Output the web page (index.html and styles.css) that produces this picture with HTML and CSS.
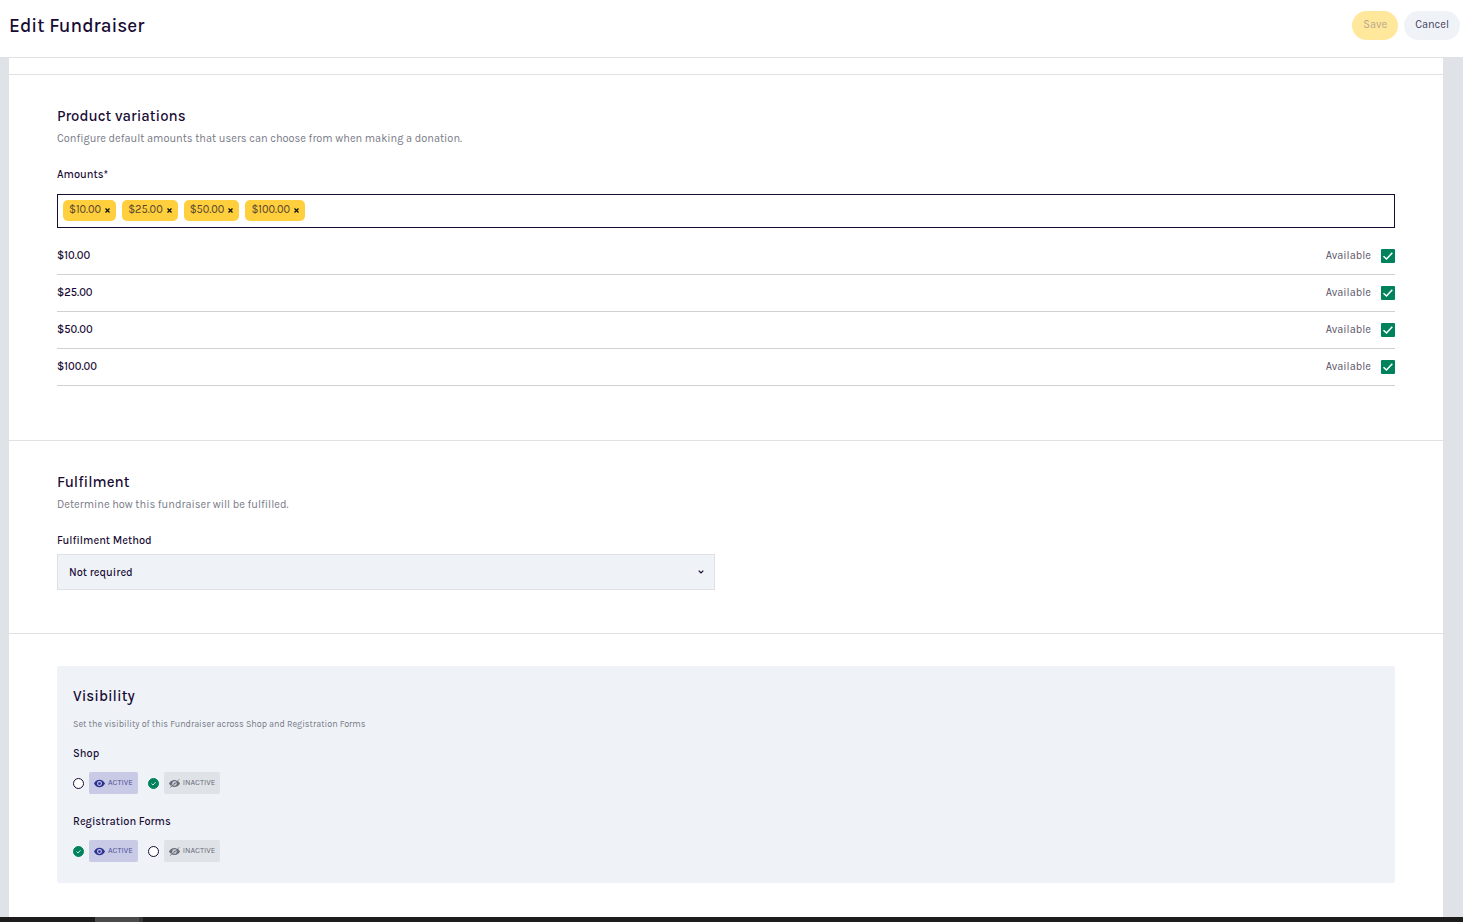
FILE: index.html
```html
<!DOCTYPE html>
<html lang="en">
<head>
<meta charset="utf-8">
<meta name="viewport" content="width=device-width, initial-scale=1">
<title>Edit Fundraiser</title>
<link rel="stylesheet" href="styles.css">
</head>
<body>
<svg class="sprite" aria-hidden="true">
  <symbol id="eye" viewBox="0 0 20 16">
    <path fill="currentColor" fill-rule="evenodd" d="M10 1C5.500 1 2 4 0 8c2 4 5.500 7 10 7s8-3 10-7c-2-4-5.500-7-10-7zM10 3.500a4.500 4.500 0 1 1 0 9 4.500 4.500 0 0 1 0-9zM10 5.500a2.500 2.500 0 1 0 0 5 2.500 2.500 0 0 0 0-5z"/>
  </symbol>
  <symbol id="eye-off" viewBox="0 0 20 16">
    <path fill="currentColor" fill-rule="evenodd" d="M10 1.500C5.500 1.500 2 4 0 8c2 4 5.500 6.500 10 6.500S18 12 20 8c-2-4-5.500-6.500-10-6.500zM10 4a4 4 0 1 1 0 8 4 4 0 0 1 0-8zM10 6a2 2 0 1 0 0 4 2 2 0 0 0 0-4z"/>
    <path stroke="#dfe2e7" stroke-width="1" d="M1.500 14 17 0"/>
    <path stroke="currentColor" stroke-width="1.200" d="M1.500 16 19.500 0"/>
  </symbol>
  <symbol id="cross" viewBox="0 0 6 6">
    <path fill="none" stroke="currentColor" stroke-width="1.500" d="M.6.6l4.800 4.800M5.400.6.6 5.400"/>
  </symbol>
</svg>

<header class="topbar">
  <h1 class="topbar-title">Edit Fundraiser</h1>
  <div class="topbar-actions">
    <button class="button button-primary" type="button" disabled>Save</button>
    <button class="button" type="button">Cancel</button>
  </div>
</header>

<div class="backdrop">
  <main class="panel">
    <div class="panel-strip"></div>

    <section class="section variations">
      <h2 class="heading">Product variations</h2>
      <p class="description">Configure default amounts that users can choose from when making a donation.</p>
      <label class="field-label" for="amounts">Amounts*</label>
      <div class="chip-box">
        <span class="chip">$10.00<button class="chip-remove" type="button" aria-label="Remove $10.00"><svg class="cross"><use href="#cross"/></svg></button></span>
        <span class="chip">$25.00<button class="chip-remove" type="button" aria-label="Remove $25.00"><svg class="cross"><use href="#cross"/></svg></button></span>
        <span class="chip">$50.00<button class="chip-remove" type="button" aria-label="Remove $50.00"><svg class="cross"><use href="#cross"/></svg></button></span>
        <span class="chip">$100.00<button class="chip-remove" type="button" aria-label="Remove $100.00"><svg class="cross"><use href="#cross"/></svg></button></span>
        <input class="chip-input" id="amounts" type="text">
      </div>
      <ul class="amounts">
        <li class="amount"><span class="amount-value">$10.00</span><label class="available">Available<input class="tick" type="checkbox" checked></label></li>
        <li class="amount"><span class="amount-value">$25.00</span><label class="available">Available<input class="tick" type="checkbox" checked></label></li>
        <li class="amount"><span class="amount-value">$50.00</span><label class="available">Available<input class="tick" type="checkbox" checked></label></li>
        <li class="amount"><span class="amount-value">$100.00</span><label class="available">Available<input class="tick" type="checkbox" checked></label></li>
      </ul>
    </section>

    <section class="section fulfilment">
      <h2 class="heading">Fulfilment</h2>
      <p class="description">Determine how this fundraiser will be fulfilled.</p>
      <div class="columns">
        <div>
          <label class="field-label" for="method">Fulfilment Method</label>
          <select class="select" id="method">
            <option>Not required</option>
          </select>
        </div>
      </div>
    </section>

    <section class="section">
      <div class="card">
        <h2 class="heading">Visibility</h2>
        <p class="card-description">Set the visibility of this Fundraiser across Shop and Registration Forms</p>
        <fieldset class="choice">
          <legend class="choice-title">Shop</legend>
          <div class="options">
            <label class="option"><input class="radio" type="radio" name="shop"><span class="tag tag-active"><svg class="eye"><use href="#eye"/></svg>ACTIVE</span></label>
            <label class="option"><input class="radio" type="radio" name="shop" checked><span class="tag"><svg class="eye"><use href="#eye-off"/></svg>INACTIVE</span></label>
          </div>
        </fieldset>
        <fieldset class="choice">
          <legend class="choice-title">Registration Forms</legend>
          <div class="options">
            <label class="option"><input class="radio" type="radio" name="forms" checked><span class="tag tag-active"><svg class="eye"><use href="#eye"/></svg>ACTIVE</span></label>
            <label class="option"><input class="radio" type="radio" name="forms"><span class="tag"><svg class="eye"><use href="#eye-off"/></svg>INACTIVE</span></label>
          </div>
        </fieldset>
      </div>
    </section>
  </main>
</div>

<footer class="taskbar"><span class="taskbar-item"></span></footer>
</body>
</html>
```
FILE: styles.css
```css
* {
  box-sizing: border-box;
}

body {
  display: flex;
  flex-direction: column;
  min-height: 100vh;
  margin: 0;
  color: #170a33;
  background: #fff;
  font: 11px/16px Karla, Inter, "Liberation Sans", sans-serif;
}

button,
input,
select {
  margin: 0;
  color: inherit;
  font: inherit;
}

.sprite {
  position: absolute;
  width: 0;
  height: 0;
}

.topbar {
  display: flex;
  justify-content: space-between;
  align-items: flex-start;
  padding: 11px 3px 16px 9px;
  border-bottom: 1px solid #dfe2e5;
}

.topbar-title {
  margin: 0;
  font-size: 19px;
  font-weight: 500;
  line-height: 30px;
}

.topbar-actions {
  display: flex;
  gap: 6px;
}

.button {
  height: 29px;
  padding: 0 11px 1px;
  border: 0;
  border-radius: 15px;
  color: #453b5c;
  background: #eff3f8;
}

.button-primary {
  color: #b9a98b;
  background: #ffe79c;
}

.backdrop {
  flex: 1;
  display: flex;
  padding: 0 20px 0 9px;
  background: #dfe2e7;
}

.panel {
  flex: 1;
  background: #fff;
}

.panel-strip {
  height: 16px;
}

.section {
  padding: 32px 48px;
  border-top: 1px solid #dfe2e5;
}

.variations {
  padding-bottom: 54px;
}

.fulfilment {
  padding-bottom: 43px;
}

.heading {
  margin: 0;
  font-size: 15px;
  font-weight: 500;
  line-height: 18px;
}

.description {
  margin: 6px 0 20px;
  color: #777986;
}

.field-label {
  display: block;
  font-weight: 500;
  line-height: 16px;
}

.chip-box {
  display: flex;
  flex-wrap: wrap;
  gap: 6px;
  min-height: 34px;
  margin: 11px 0 10px;
  padding: 5px;
  border: 1px solid #170a33;
}

.chip {
  display: flex;
  align-items: center;
  gap: 4px;
  height: 21px;
  padding: 0 6px 1px;
  border-radius: 5px;
  color: #55452f;
  background: #ffcf3d;
}

.chip-remove {
  display: flex;
  padding: 1px 0 0;
  border: 0;
  color: #111;
  background: none;
}

.cross {
  width: 5px;
  height: 5px;
}

.chip-input {
  flex: 1;
  min-width: 40px;
  height: 21px;
  padding: 0;
  border: 0;
  outline: 0;
  background: none;
}

.amounts {
  margin: 0;
  padding: 0;
  list-style: none;
}

.amount {
  display: flex;
  justify-content: space-between;
  align-items: center;
  height: 37px;
  border-bottom: 1px solid #cfd0d2;
}

.amount-value {
  font-weight: 500;
}

.available {
  display: flex;
  align-items: center;
  gap: 10px;
  color: #5b5468;
}

.tick {
  width: 14px;
  height: 14px;
  border-radius: 1px;
  appearance: none;
  background: #fff;
}

.tick:checked {
  background: #00835c url("data:image/svg+xml,%3Csvg xmlns='http://www.w3.org/2000/svg' viewBox='0 0 14 14'%3E%3Cpath d='M2.500 7.200 5.500 10 11.300 3.800' fill='none' stroke='white' stroke-width='1.500'/%3E%3C/svg%3E") center / 14px 14px;
}

.columns {
  display: grid;
  grid-template-columns: 1fr 1fr;
  gap: 22px;
}

.select {
  display: block;
  width: 100%;
  height: 36px;
  margin-top: 5px;
  padding: 2px 11px 0;
  border: 1px solid #dde1e6;
  border-radius: 0;
  appearance: none;
  font-weight: 500;
  background: #eff3f8 url("data:image/svg+xml,%3Csvg xmlns='http://www.w3.org/2000/svg' viewBox='0 0 6 4'%3E%3Cpath d='M.7.7 3 3 5.300.7' fill='none' stroke='%23170a33' stroke-width='1.200'/%3E%3C/svg%3E") right 10px center / 6px 4px no-repeat;
}

.card {
  padding: 21px 16px;
  border-radius: 2px;
  background: #eff3f8;
}

.card-description {
  margin: 12px 0 16px;
  color: #777986;
  font-size: 9px;
  line-height: 14px;
}

.choice {
  margin: 0;
  padding: 0;
  border: 0;
}

.choice + .choice {
  margin-top: 21px;
}

.choice-title {
  padding: 0;
  font-weight: 500;
  line-height: 14px;
}

.options {
  display: flex;
  gap: 10px;
  padding-top: 11px;
}

.option {
  display: flex;
  align-items: center;
  gap: 5px;
}

.radio {
  width: 11px;
  height: 11px;
  border: 1px solid #170a33;
  border-radius: 50%;
  appearance: none;
  background: #fff;
}

.radio:checked {
  border-color: #00835c;
  background: #00835c url("data:image/svg+xml,%3Csvg xmlns='http://www.w3.org/2000/svg' viewBox='0 0 11 11'%3E%3Cpath d='M3.500 5.600 5 7 7.600 4.200' fill='none' stroke='white' stroke-width='.8'/%3E%3C/svg%3E") center / 11px 11px;
}

.tag {
  display: flex;
  align-items: center;
  gap: 3px;
  height: 22px;
  padding: 0 5px;
  border-radius: 2px;
  color: #686b78;
  background: #dfe2e7;
  font-size: 8px;
}

.tag-active {
  color: #4d5195;
  background: #c9cae6;
}

.eye {
  width: 11px;
  height: 9px;
}

.tag-active .eye {
  color: #2b3192;
}

.taskbar {
  height: 5px;
  padding-left: 95px;
  background: #1c1c1c;
}

.taskbar-item {
  display: block;
  width: 48px;
  height: 5px;
  border-right: 4px solid #383838;
  background: #4b4b4b;
}
```
